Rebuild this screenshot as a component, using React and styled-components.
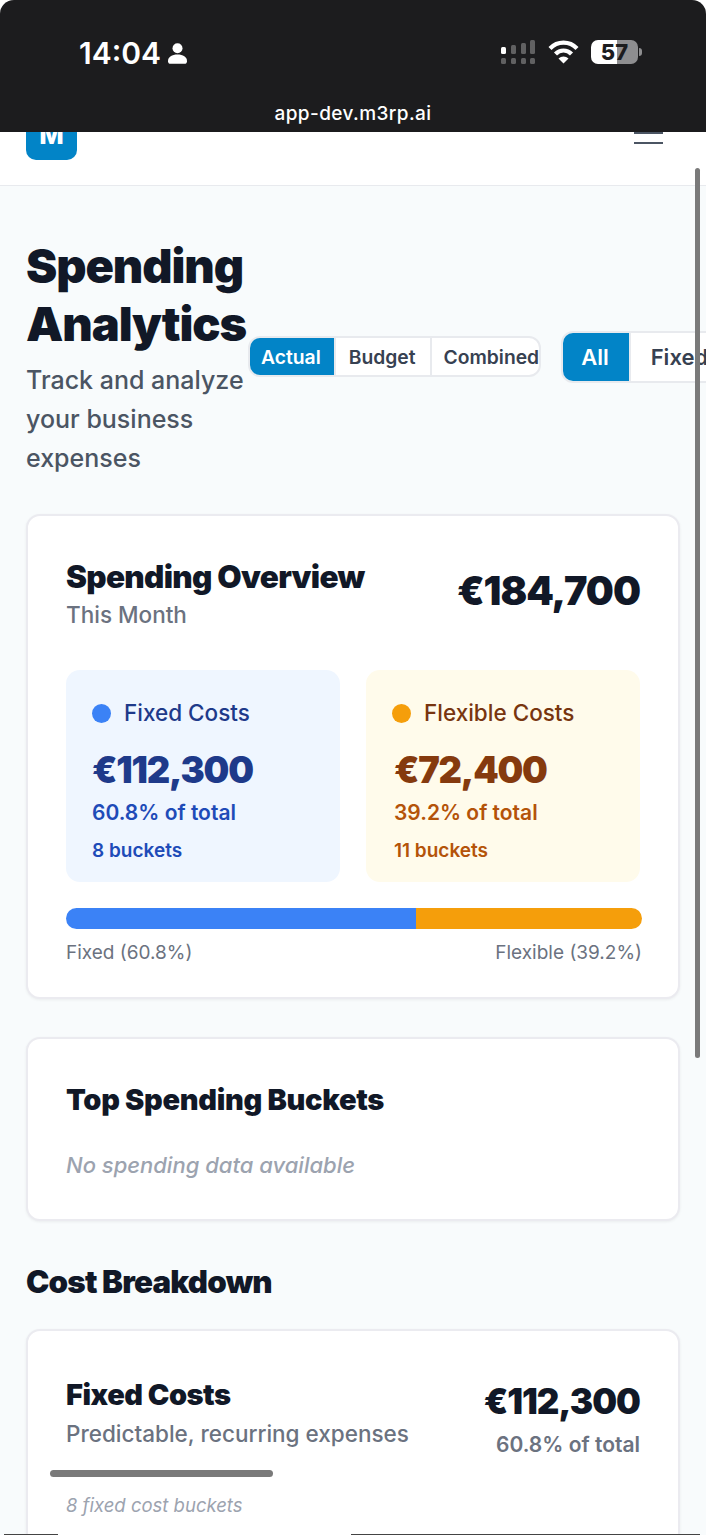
import React from 'react';
import styled, { createGlobalStyle } from 'styled-components';

const GlobalStyle = createGlobalStyle`
  html, body {
    margin: 0;
    padding: 0;
    background: #f8fbfc;
    font-family: Inter, "Liberation Sans", sans-serif;
  }
  * { box-sizing: border-box; }
`;

const Page = styled.div`
  position: relative;
  width: 706px;
  height: 1535px;
  overflow: hidden;
  background: #fff;
`;

/* phone chrome */
const PhoneBar = styled.div`
  height: 132px;
  background: #1c1c1e;
  border-radius: 14px 14px 0 0;
  display: flex;
  flex-direction: column;
  color: #fff;
`;

const StatusRow = styled.div`
  display: flex;
  justify-content: space-between;
  align-items: center;
  height: 52px;
  margin-top: 26px;
  padding: 0 68px 0 79px;
`;

const TimeBlock = styled.div`
  display: flex;
  align-items: center;
  gap: 7px;
  font-size: 30px;
  font-weight: 600;
  line-height: 1;
  padding-top: 2px;
`;

const StatusIcons = styled.div`
  display: flex;
  align-items: center;
  gap: 12px;
`;

const Battery = styled.div`
  width: 47px;
  height: 24px;
  border-radius: 7px;
  background: linear-gradient(90deg, #fff 0 55%, #8e8e90 55% 100%);
  color: #1c1c1e;
  font-size: 22px;
  font-weight: 800;
  line-height: 24px;
  text-align: center;
  position: relative;
  &::after {
    content: '';
    position: absolute;
    right: -4px;
    top: 8px;
    width: 3px;
    height: 8px;
    border-radius: 0 3px 3px 0;
    background: #8e8e90;
  }
`;

const UrlLabel = styled.div`
  margin-top: 24px;
  text-align: center;
  font-size: 19px;
  line-height: 24px;
  letter-spacing: 0.4px;
  font-weight: 500;
`;

/* app header, scrolled partly under the chrome */
const Header = styled.header`
  height: 54px;
  overflow: hidden;
  background: #fff;
  border-bottom: 1px solid #e8eaee;
  box-shadow: 0 1px 3px rgba(0, 0, 0, 0.08);
  padding: 0 43px 25px 26px;
  display: flex;
  justify-content: space-between;
  align-items: flex-end;
`;

const Logo = styled.div`
  flex: none;
  width: 51px;
  height: 51px;
  border-radius: 10px;
  background: #0284c7;
  color: #fff;
  font-size: 26px;
  font-weight: 800;
  display: flex;
  align-items: center;
  justify-content: center;
`;

const MenuLines = styled.div`
  flex: none;
  width: 29px;
  display: flex;
  flex-direction: column;
  gap: 8px;
  margin-bottom: 16px;
  span {
    display: block;
    height: 2px;
    background: #4b5563;
  }
`;

const Main = styled.main`
  padding: 0 26px;
  height: 1349px;
  background: #f8fbfc;
`;

const TitleRow = styled.div`
  display: flex;
  align-items: center;
  padding-top: 51px;
  width: 900px;
`;

const TitleBlock = styled.div`
  flex: none;
  width: 223px;
`;

const Title = styled.h1`
  margin: 0;
  font-size: 47px;
  line-height: 58px;
  font-weight: 900;
  letter-spacing: -1.1px;
  color: #111827;
`;

const Subtitle = styled.p`
  margin: 8px 0 0;
  font-size: 25px;
  line-height: 39px;
  font-weight: 500;
  color: #4b5563;
`;

const ViewToggle = styled.div`
  flex: none;
  display: flex;
  margin: 0 0 2px ${p => p.$offset}px;
  height: ${p => p.$height}px;
  background: #fff;
  border: 2px solid #e8eaee;
  border-radius: 12px;
  overflow: hidden;
`;

const ToggleButton = styled.div`
  display: flex;
  align-items: center;
  padding: 0 ${p => p.$end ?? p.$pad}px 0 ${p => p.$pad}px;
  font-size: ${p => p.$size}px;
  font-weight: 600;
  color: ${p => (p.$active ? '#fff' : '#374151')};
  background: ${p => (p.$active ? '#0284c7' : 'transparent')};
  & + & {
    border-left: 2px solid #e8eaee;
  }
`;

const Card = styled.section`
  background: #fff;
  border: 2px solid #ebebf0;
  border-radius: 14px;
  box-shadow: 0 1px 3px rgba(0, 0, 0, 0.06);
  padding: ${p => p.$pad};
  margin-top: ${p => p.$top}px;
`;

const CardHead = styled.div`
  display: flex;
  justify-content: space-between;
  align-items: flex-start;
`;

const CardTitle = styled.h2`
  margin: 0;
  font-size: ${p => p.$size}px;
  line-height: 40px;
  font-weight: 900;
  letter-spacing: ${p => p.$track}px;
  color: #111827;
`;

const CardSub = styled.div`
  margin-top: ${p => p.$top || 0}px;
  font-size: 22.500px;
  line-height: 36px;
  font-weight: 500;
  color: #6b7280;
`;

const Amount = styled.div`
  margin-top: ${p => p.$top}px;
  font-size: ${p => p.$size}px;
  line-height: ${p => p.$line}px;
  font-weight: 900;
  letter-spacing: -1px;
  color: #111827;
  text-align: right;
`;

const SplitGrid = styled.div`
  display: grid;
  grid-template-columns: 274px 274px;
  justify-content: space-between;
  margin-top: 37px;
`;

const CostTile = styled.div`
  height: 212px;
  border-radius: 14px;
  padding: 26px 26px 0;
  background: ${p => p.$bg};
`;

const TileLabel = styled.div`
  display: flex;
  align-items: center;
  gap: 13px;
  font-size: 22.500px;
  line-height: 34px;
  font-weight: 500;
  color: ${p => p.$color};
`;

const Dot = styled.span`
  width: 19px;
  height: 19px;
  border-radius: 50%;
  background: ${p => p.$color};
`;

const TileFigures = styled.div`
  padding-left: ${p => p.$inset || 0}px;
`;

const TileAmount = styled.div`
  margin-top: 18px;
  font-size: 36.300px;
  line-height: 44px;
  font-weight: 900;
  letter-spacing: -1.2px;
  color: ${p => p.$color};
`;

const TileShare = styled.div`
  margin-top: 5px;
  font-size: 21px;
  line-height: 32px;
  font-weight: 600;
  color: ${p => p.$color};
`;

const TileCount = styled.div`
  margin-top: 7px;
  font-size: 19px;
  line-height: 30px;
  font-weight: 600;
  color: ${p => p.$color};
`;

const SplitBar = styled.div`
  display: flex;
  height: 21px;
  margin-top: 26px;
  width: 576px;
  border-radius: 11px;
  overflow: hidden;
`;

const SplitPart = styled.div`
  background: ${p => p.$color};
`;

const SplitLegend = styled.div`
  display: flex;
  justify-content: space-between;
  width: 576px;
  margin-top: 9px;
  font-size: 19px;
  line-height: 30px;
  color: #6b7280;
`;

const EmptyNote = styled.div`
  margin-top: 29px;
  font-size: 22px;
  line-height: 32px;
  font-style: italic;
  font-weight: 500;
  color: #9ca3af;
`;

const SectionTitle = styled.h2`
  margin: 41px 0 0;
  font-size: 31.300px;
  line-height: 40px;
  font-weight: 900;
  letter-spacing: -0.8px;
  color: #111827;
`;

const AmountSide = styled.div`
  text-align: right;
`;

const AmountShare = styled.div`
  margin-top: 5px;
  font-size: 21px;
  line-height: 34px;
  font-weight: 600;
  color: #6b7280;
`;

const BucketNote = styled.div`
  margin-top: 28px;
  font-size: 18.500px;
  line-height: 30px;
  font-style: italic;
  color: #9ca3af;
`;

/* overlays */
const ScrollThumb = styled.div`
  position: absolute;
  background: #7a7a7a;
  border-radius: 4px;
  left: ${p => p.$x}px;
  top: ${p => p.$y}px;
  width: ${p => p.$w}px;
  height: ${p => p.$h}px;
`;

const EdgeLine = styled.div`
  position: absolute;
  bottom: 0;
  height: 1px;
  background: #444;
  left: ${p => p.$x}px;
  width: ${p => p.$w}px;
`;

const PersonIcon = () => (
  <svg width="19" height="21" viewBox="0 0 19 21" fill="#fff">
    <circle cx="9.5" cy="5.2" r="5" />
    <path d="M0 18.2C0 14 4 11.6 9.5 11.6S19 14 19 18.2c0 1.6-1 2.6-2.6 2.6H2.6C1 20.8 0 19.800 0 18.2z" />
  </svg>
);

const SignalIcon = () => (
  <svg width="35" height="24" viewBox="0 0 35 24" fill="#fff">
    <rect x="0" y="7" width="5" height="7" rx="1.500" />
    <g opacity="0.3">
      <rect x="10" y="5" width="5" height="9" rx="1.500" />
      <rect x="20" y="3" width="5" height="11" rx="1.500" />
      <rect x="29" y="0" width="5" height="14" rx="1.500" />
      <rect x="0" y="18" width="5" height="6" rx="1.500" />
      <rect x="10" y="18" width="5" height="6" rx="1.500" />
      <rect x="20" y="18" width="5" height="6" rx="1.500" />
      <rect x="29" y="18" width="5" height="6" rx="1.500" />
    </g>
  </svg>
);

const WifiIcon = () => (
  <svg width="31" height="24" viewBox="0 0 31 24" fill="none" stroke="#fff" strokeWidth="4.2">
    <path d="M2 8.500C9.500 .7 21.500 .7 29 8.500" />
    <path d="M7.500 14C12 9.300 19 9.300 23.500 14" />
    <path d="M15.500 23.500L10.500 18.500C13.300 15.800 17.700 15.800 20.500 18.500Z" fill="#fff" stroke="none" />
  </svg>
);

const App = () => (
  <Page>
    <GlobalStyle />
    <PhoneBar>
      <StatusRow>
        <TimeBlock>14:04 <PersonIcon /></TimeBlock>
        <StatusIcons>
          <SignalIcon />
          <WifiIcon />
          <Battery>57</Battery>
        </StatusIcons>
      </StatusRow>
      <UrlLabel>app-dev.m3rp.ai</UrlLabel>
    </PhoneBar>

    <Header>
      <Logo>M</Logo>
      <MenuLines><span /><span /><span /></MenuLines>
    </Header>

    <Main>
      <TitleRow>
        <TitleBlock>
          <Title>Spending Analytics</Title>
          <Subtitle>Track and analyze your business expenses</Subtitle>
        </TitleBlock>
        <ViewToggle $offset={-1} $height={41}>
          <ToggleButton $active $pad={11} $end={13} $size={19.3}>Actual</ToggleButton>
          <ToggleButton $pad={13} $end={14} $size={19.3}>Budget</ToggleButton>
          <ToggleButton $pad={12} $end={0} $size={19.3}>Combined</ToggleButton>
        </ViewToggle>
        <ViewToggle $offset={20} $height={52}>
          <ToggleButton $active $pad={18} $end={20} $size={22}>All</ToggleButton>
          <ToggleButton $pad={20} $size={22}>Fixed</ToggleButton>
        </ViewToggle>
      </TitleRow>

      <Card $top={36} $pad="41px 38px 29px">
        <CardHead>
          <div>
            <CardTitle $size={31.5} $track={-0.7}>Spending Overview</CardTitle>
            <CardSub>This Month</CardSub>
          </div>
          <Amount $top={9} $size={39.5} $line={50}>€184,700</Amount>
        </CardHead>
        <SplitGrid>
          <CostTile $bg="#eff6ff">
            <TileLabel $color="#1e3a8a"><Dot $color="#3b82f6" />Fixed Costs</TileLabel>
            <TileFigures>
              <TileAmount $color="#1e3a8a">€112,300</TileAmount>
              <TileShare $color="#1e4bb8">60.8% of total</TileShare>
              <TileCount $color="#1e4bb8">8 buckets</TileCount>
            </TileFigures>
          </CostTile>
          <CostTile $bg="#fffbeb">
            <TileLabel $color="#78350f"><Dot $color="#f59e0b" />Flexible Costs</TileLabel>
            <TileFigures $inset={2}>
              <TileAmount $color="#853a0e">€72,400</TileAmount>
              <TileShare $color="#b45309">39.2% of total</TileShare>
              <TileCount $color="#b45309">11 buckets</TileCount>
            </TileFigures>
          </CostTile>
        </SplitGrid>
        <SplitBar>
          <SplitPart $color="#3b82f6" style={{ width: '60.8%' }} />
          <SplitPart $color="#f59e0b" style={{ width: '39.2%' }} />
        </SplitBar>
        <SplitLegend>
          <span>Fixed (60.8%)</span>
          <span>Flexible (39.2%)</span>
        </SplitLegend>
      </Card>

      <Card $top={38} $pad="41px 38px 38px">
        <CardTitle $size={29} $track={-0.3}>Top Spending Buckets</CardTitle>
        <EmptyNote>No spending data available</EmptyNote>
      </Card>

      <SectionTitle>Cost Breakdown</SectionTitle>

      <Card $top={27} $pad="44px 38px">
        <CardHead>
          <div>
            <CardTitle $size={29} $track={-0.5}>Fixed Costs</CardTitle>
            <CardSub $top={1}>Predictable, recurring expenses</CardSub>
          </div>
          <AmountSide>
            <Amount $top={4} $size={35} $line={44}>€112,300</Amount>
            <AmountShare>60.8% of total</AmountShare>
          </AmountSide>
        </CardHead>
        <BucketNote>8 fixed cost buckets</BucketNote>
      </Card>
    </Main>

    <ScrollThumb $x={695} $y={168} $w={5} $h={890} />
    <ScrollThumb $x={50} $y={1470} $w={223} $h={7} />
    <EdgeLine $x={4} $w={54} />
    <EdgeLine $x={351} $w={349} />
  </Page>
);

export default App;
